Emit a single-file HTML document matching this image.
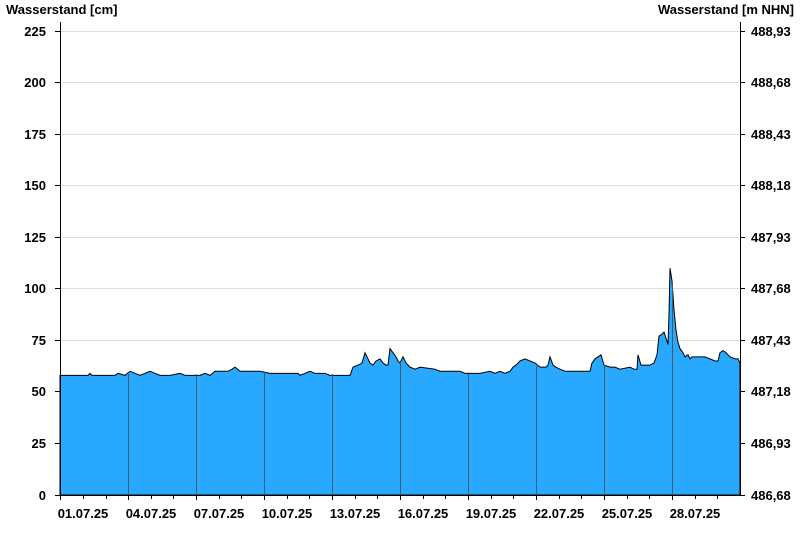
<!DOCTYPE html>
<html><head><style>
body{margin:0;background:#fff;width:800px;height:550px;overflow:hidden}
text{font-family:"Liberation Sans",Arial,sans-serif;font-weight:bold;font-size:13px;fill:#000}
</style></head><body>
<svg width="800" height="550" xmlns="http://www.w3.org/2000/svg">
<text x="6" y="14">Wasserstand [cm]</text>
<text x="794" y="14" text-anchor="end">Wasserstand [m NHN]</text>
<g stroke="#ddd" stroke-width="1">
<line x1="60" x2="740" y1="31.5" y2="31.5"/><line x1="60" x2="740" y1="82.5" y2="82.5"/>
<line x1="60" x2="740" y1="134.5" y2="134.5"/><line x1="60" x2="740" y1="185.5" y2="185.5"/>
<line x1="60" x2="740" y1="237.5" y2="237.5"/><line x1="60" x2="740" y1="288.5" y2="288.5"/>
<line x1="60" x2="740" y1="340.5" y2="340.5"/><line x1="60" x2="740" y1="391.5" y2="391.5"/>
<line x1="60" x2="740" y1="443.5" y2="443.5"/>
</g>
<g transform="translate(0,495) scale(1,-2.0622)">
<polygon fill="#29a8ff" stroke="#000" stroke-width="1" vector-effect="non-scaling-stroke" points="60,0 60,58 88,58 90,59 92,58 115,58 118,59 125,58 130,60 135,59 140,58 145,59 150,60 155,59 160,58 165,58 170,58 180,59 185,58 200,58 205,59 210,58 215,60 220,60 228,60 232,61 235,62 240,60 255,60 260,60 270,59 298,59 300,58 305,59 310,60 315,59 325,59 330,58 350,58 353,62 358,63 362,64 365,69 368,66 370,64 373,63 376,65 380,66 383,64 386,63 388,63 390,71 393,69 396,67 398,65 400,64 403,67 406,64 410,62 415,61 420,62 435,61 440,60 450,60 460,60 465,59 470,59 480,59 490,60 495,59 500,60 505,59 510,60 513,62 516,63 520,65 525,66 530,65 535,64 540,62 546,62 548,63 550,67 553,63 556,62 560,61 565,60 590,60 592,64 595,66 598,67 601,68 604,63 610,62 615,62 620,61 630,62 634,61 637,61 638,68 641,63 645,63 650,63 654,64 657,68 659,77 662,78 664,79 666,76 668,73 669,88 670,110 672,104 674,90 676,80 678,74 680,71 683,69 685,67 688,68 690,66 692,67 695,67 700,67 705,67 710,66 715,65 718,65 720,69 723,70 726,69 730,67 735,66 738,66 740,64 740,0"/>
</g>
<g stroke="#3a5a70" stroke-width="1">
<line x1="128.5" x2="128.5" y1="374" y2="495"/><line x1="196.5" x2="196.5" y1="374" y2="495"/>
<line x1="264.5" x2="264.5" y1="372" y2="495"/><line x1="332.5" x2="332.5" y1="374" y2="495"/>
<line x1="400.5" x2="400.5" y1="362" y2="495"/><line x1="468.5" x2="468.5" y1="374" y2="495"/>
<line x1="536.5" x2="536.5" y1="366" y2="495"/><line x1="604.5" x2="604.5" y1="365" y2="495"/>
<line x1="672.5" x2="672.5" y1="282" y2="495"/>
</g>
<g stroke="#000" stroke-width="1">
<line x1="60.5" x2="60.5" y1="22" y2="500"/>
<line x1="740.5" x2="740.5" y1="22" y2="495"/>
<line x1="55" x2="740" y1="495.5" y2="495.5"/>
<path d="M55 31.5h5M55 82.5h5M55 134.5h5M55 185.5h5M55 237.5h5M55 288.5h5M55 340.5h5M55 391.5h5M55 443.5h5"/>
<path d="M740 31.5h5M740 82.5h5M740 134.5h5M740 185.5h5M740 237.5h5M740 288.5h5M740 340.5h5M740 391.5h5M740 443.5h5M740 495.5h5"/>
<path d="M83.5 495v4M106.5 495v4M128.5 495v5M151.5 495v4M173.5 495v4M196.5 495v5M219.5 495v4M241.5 495v4M264.5 495v5M287.5 495v4M309.5 495v4M332.5 495v5M355.5 495v4M377.5 495v4M400.5 495v5M423.5 495v4M445.5 495v4M468.5 495v5M491.5 495v4M513.5 495v4M536.5 495v5M559.5 495v4M581.5 495v4M604.5 495v5M627.5 495v4M649.5 495v4M672.5 495v5M695.5 495v4M717.5 495v4"/>
</g>
<g text-anchor="end">
<text x="46" y="36">225</text><text x="46" y="87">200</text><text x="46" y="139">175</text>
<text x="46" y="190">150</text><text x="46" y="242">125</text><text x="46" y="293">100</text>
<text x="46" y="345">75</text><text x="46" y="396">50</text><text x="46" y="448">25</text><text x="46" y="500">0</text>
</g>
<g>
<text x="751" y="36">488,93</text><text x="751" y="87">488,68</text><text x="751" y="139">488,43</text>
<text x="751" y="190">488,18</text><text x="751" y="242">487,93</text><text x="751" y="293">487,68</text>
<text x="751" y="345">487,43</text><text x="751" y="396">487,18</text><text x="751" y="448">486,93</text><text x="751" y="500">486,68</text>
</g>
<g text-anchor="middle">
<text x="83" y="518">01.07.25</text><text x="151" y="518">04.07.25</text><text x="219" y="518">07.07.25</text>
<text x="287" y="518">10.07.25</text><text x="355" y="518">13.07.25</text><text x="423" y="518">16.07.25</text>
<text x="491" y="518">19.07.25</text><text x="559" y="518">22.07.25</text><text x="627" y="518">25.07.25</text>
<text x="695" y="518">28.07.25</text>
</g>
</svg>
</body></html>
